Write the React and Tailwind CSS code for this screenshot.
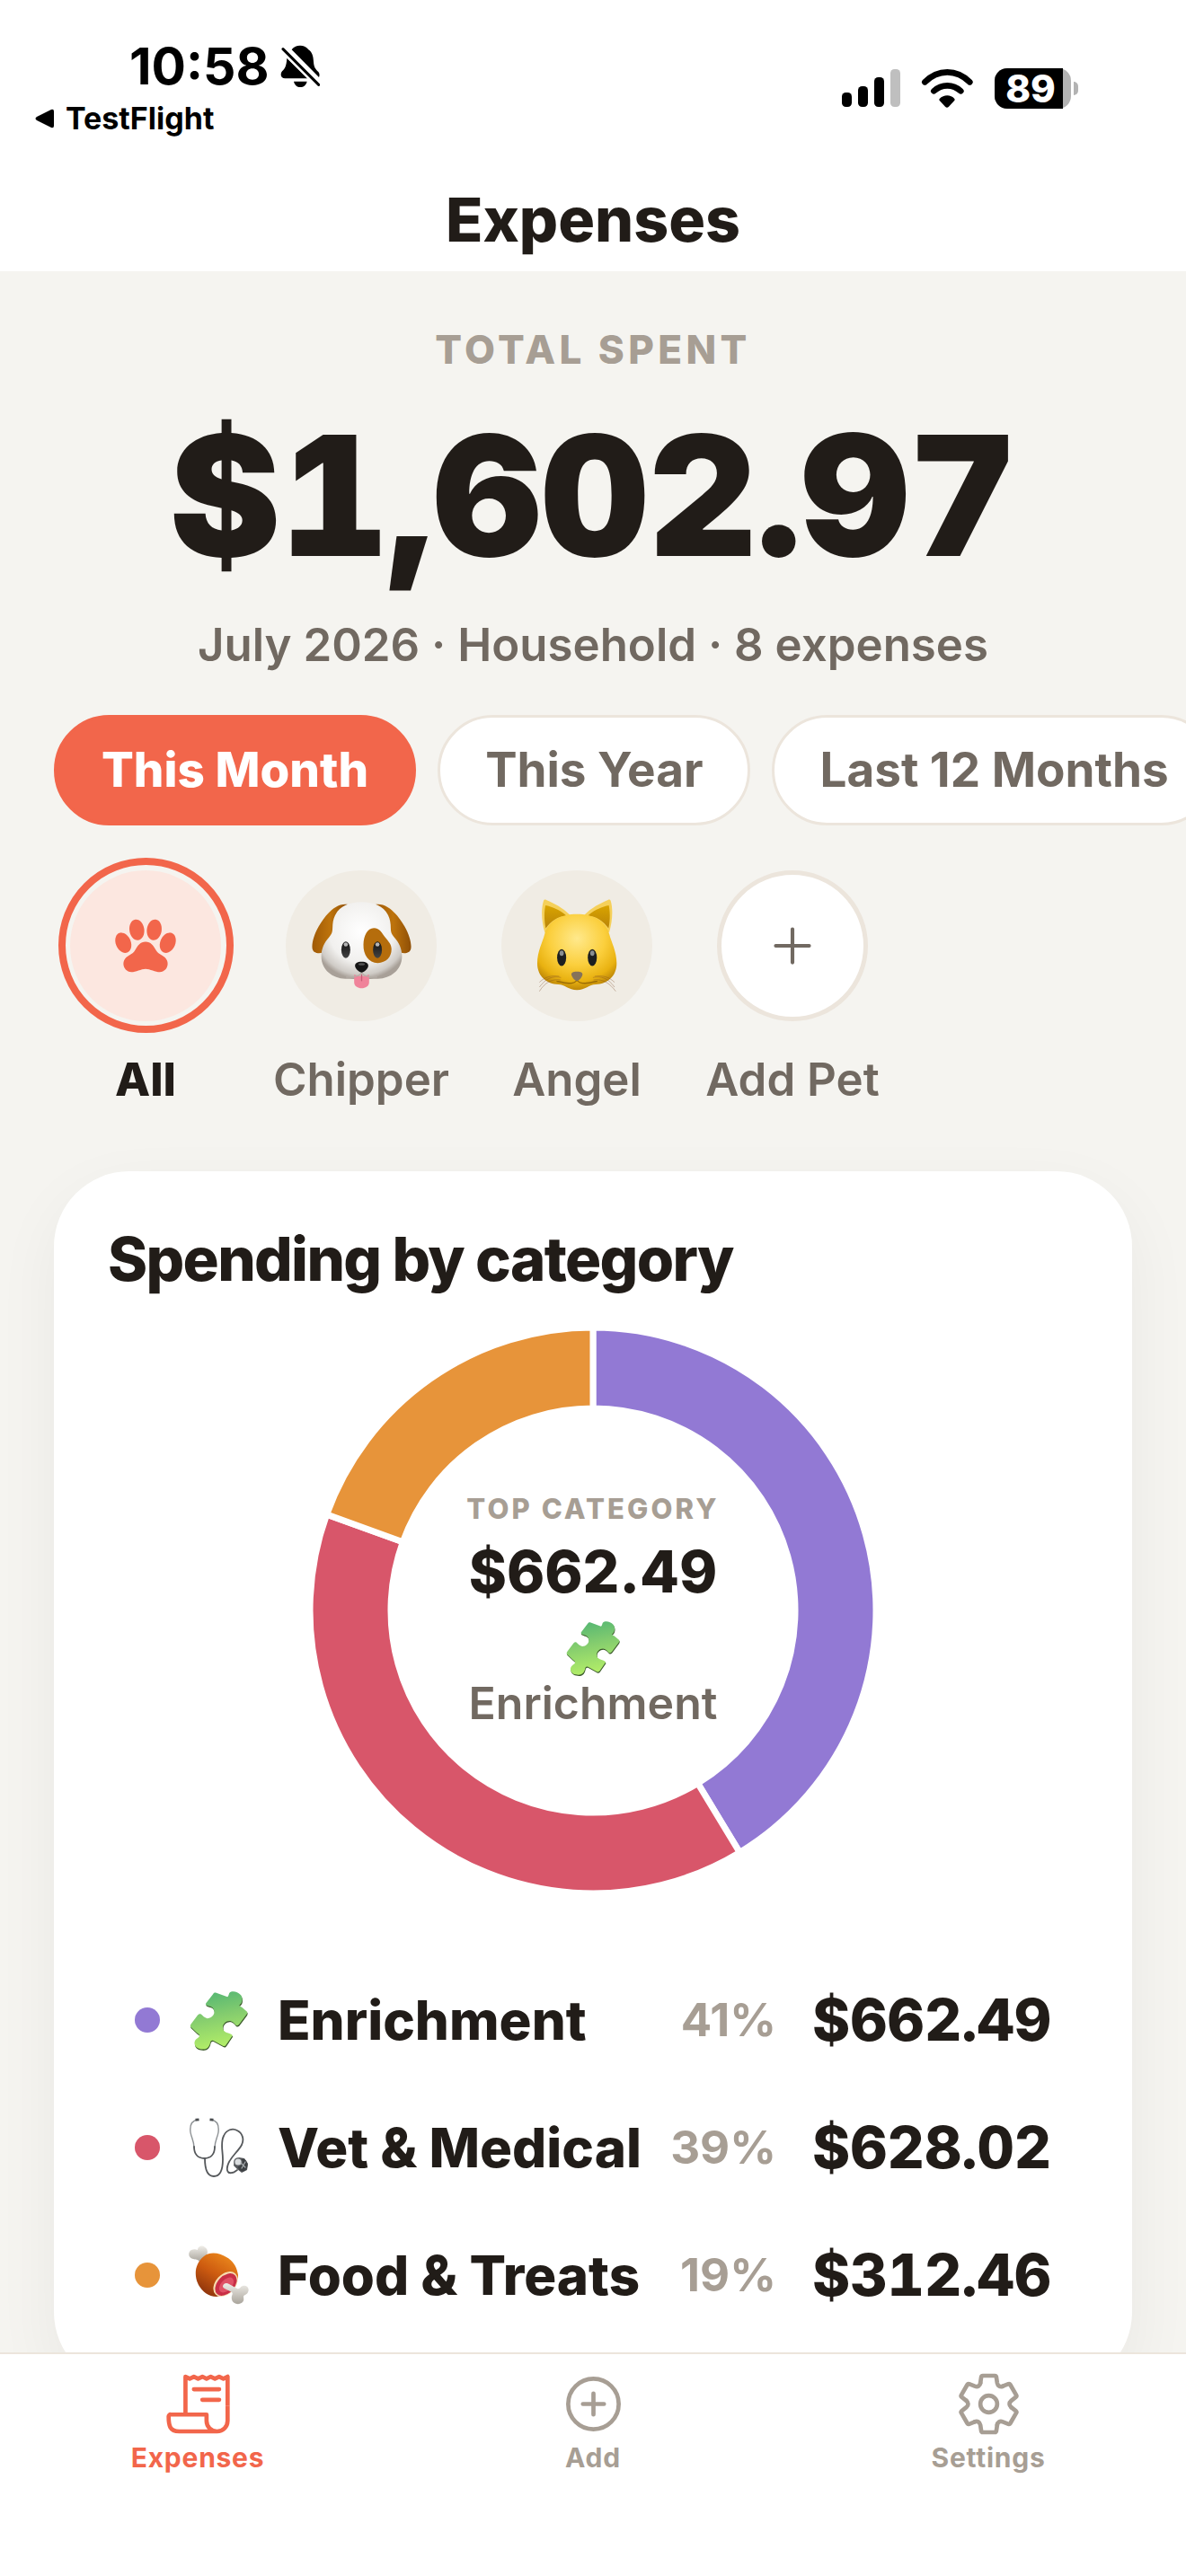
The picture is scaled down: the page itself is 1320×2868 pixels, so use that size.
import React, { useState } from 'react';
import { IoAddCircleOutline, IoPaw, IoReceiptOutline, IoAdd } from 'react-icons/io5';

const CATEGORIES = [
  { id: 'enrichment', name: 'Enrichment', amount: 662.49, percent: 41, color: '#9279d4', icon: PuzzleIcon },
  { id: 'vet', name: 'Vet & Medical', amount: 628.02, percent: 39, color: '#d8566a', icon: StethoscopeIcon },
  { id: 'food', name: 'Food & Treats', amount: 312.46, percent: 19, color: '#e7943a', icon: MeatIcon },
];

const PERIODS = ['This Month', 'This Year', 'Last 12 Months'];

const TABS = [
  { id: 'expenses', label: 'Expenses', icon: IoReceiptOutline },
  { id: 'add', label: 'Add', icon: IoAddCircleOutline },
  { id: 'settings', label: 'Settings', icon: GearIcon },
];

const money = (value) => value.toLocaleString('en-US', { style: 'currency', currency: 'USD' });

function DogIcon() {
  return (
    <svg viewBox="912 215 340 296" className="w-[113px]" aria-hidden="true">
      <defs>
        <radialGradient id="dogHead" cx="0.5" cy="0.38" r="0.62">
          <stop offset="0" stopColor="#ffffff" />
          <stop offset="0.65" stopColor="#f1f0ee" />
          <stop offset="0.9" stopColor="#cfcbc6" />
          <stop offset="1" stopColor="#a8a098" />
        </radialGradient>
        <linearGradient id="dogEar" x1="0" y1="0" x2="1" y2="0">
          <stop offset="0" stopColor="#a05a06" />
          <stop offset="0.5" stopColor="#bd730c" />
          <stop offset="1" stopColor="#8f4f06" />
        </linearGradient>
        <linearGradient id="dogEye" x1="0" y1="0" x2="0" y2="1">
          <stop offset="0" stopColor="#111" />
          <stop offset="1" stopColor="#444" />
        </linearGradient>
      </defs>
      <path d="M1036 227c-42-6-76 36-98 74-16 28-24 58-21 74 3 14 17 17 33 14 24-16 44-60 50-100z" fill="url(#dogEar)" />
      <path d="M1128 227c42-6 76 36 98 74 16 28 24 58 21 74-3 14-17 17-33 14-24-16-44-60-50-100z" fill="url(#dogEar)" />
      <path d="M1082 219c-58 0-94 28-97 76-1 22 0 28-12 42-16 17-26 38-26 64 0 46 38 74 80 75 20 0 34 2 55 2s35-2 55-2c42-1 80-29 80-75 0-26-10-47-26-64-12-14-11-20-12-42-3-48-39-76-97-76z" fill="url(#dogHead)" />
      <path d="M1123 306c-22 0-34 26-35 55-1 34 17 62 48 62 28 0 46-20 46-46 0-18-12-28-22-41-11-14-17-30-37-30z" fill="#b56d0c" />
      <ellipse cx="1029" cy="379" rx="15" ry="28" fill="url(#dogEye)" />
      <ellipse cx="1135" cy="379" rx="15" ry="28" fill="url(#dogEye)" />
      <ellipse cx="1029" cy="361" rx="7" ry="7" fill="#b5b5b5" />
      <ellipse cx="1135" cy="361" rx="7" ry="7" fill="#b5b5b5" />
      <path d="M1057 462c16 7 34 7 50 0v26c0 26-50 26-50 0z" fill="#f0839a" />
      <path d="M1082 462v20" stroke="#c65c74" strokeWidth="4" strokeLinecap="round" />
      <path d="M1030 470c22 2 42-2 52-14 10 12 30 16 52 14" fill="none" stroke="#b5aea7" strokeWidth="4" />
      <path d="M1082 419c15 0 23 5 22 15-1 9-14 21-22 21s-21-12-22-21c-1-10 7-15 22-15z" fill="#151515" />
      <ellipse cx="1082" cy="427" rx="11" ry="4" fill="#555" />
    </svg>
  );
}

function CatIcon() {
  return (
    <svg viewBox="168 186 272 314" className="w-[91px]" aria-hidden="true">
      <defs>
        <radialGradient id="catHead" cx="0.5" cy="0.32" r="0.7">
          <stop offset="0" stopColor="#ffe98c" />
          <stop offset="0.5" stopColor="#fbcf3d" />
          <stop offset="0.8" stopColor="#e9b211" />
          <stop offset="1" stopColor="#b67f05" />
        </radialGradient>
        <linearGradient id="catEar" x1="0" y1="0" x2="0" y2="1">
          <stop offset="0" stopColor="#d9a400" />
          <stop offset="1" stopColor="#b98408" />
        </linearGradient>
      </defs>
      <path d="M196 300c-12-38-12-82-4-106 2-4 5-4 9-2 28 12 58 28 78 50zM410 300c12-38 13-82 5-106-2-4-5-4-9-2-28 12-58 28-78 50z" fill="#f5d05a" />
      <path d="M199 286c-6-28-5-56-1-76 24 4 52 18 70 34-28 2-52 18-69 42zM408 286c6-28 5-56 1-76-24 4-52 18-70 34 28 2 52 18 69 42z" fill="url(#catEar)" />
      <path d="M303 239c-54 0-96 24-108 68-6 24-24 56-24 96 0 44 32 69 70 70 22 0 34 19 62 19s40-19 62-19c38-1 70-26 70-70 0-40-18-72-24-96-12-44-54-68-108-68z" fill="url(#catHead)" />
      <path d="M235 462c26 6 54 14 68-3 14 17 42 9 68 3" fill="none" stroke="#9b6c05" strokeWidth="4" />
      <path d="M250 450c-28-6-50 2-72 32M248 458c-28-4-52 8-70 38M244 446c-26-4-48 2-66 20M356 450c28-6 50 2 72 32M358 458c28-4 52 8 74 38M362 446c26-4 48 2 66 20" fill="none" stroke="#7b4a2a" strokeOpacity="0.55" strokeWidth="2" />
      <ellipse cx="252" cy="384" rx="15" ry="28" fill="#1d1f20" />
      <ellipse cx="354" cy="384" rx="15" ry="28" fill="#1d1f20" />
      <ellipse cx="252" cy="369" rx="7" ry="9" fill="#8a8f92" />
      <ellipse cx="354" cy="369" rx="7" ry="9" fill="#8a8f92" />
      <path d="M303 430c14 0 20 4 18 12-2 8-12 19-18 19s-16-11-18-19c-2-8 4-12 18-12z" fill="#85735a" />
    </svg>
  );
}

function PuzzleIcon({ className }) {
  const piece =
    'M777 820l27 10c3-2 3-7 5-10 6-6 20-3 27 5 6 7 4 19-1 23-4 3-1 4 4 7l12 10c2 2 1 5-1 8l-18 24c-3 3-5 3-8 1-4-4-8-10-15-10-9 0-17 8-16 17 0 7 5 10 11 12 8 3 12 4 12 7l-15 22c-3 4-5 4-9 2l-22-12c-5-2-7 1-8 6-3 13-12 17-24 14-12-2-17-13-12-21 4-6 9-6 10-10 1-3-2-5-6-8l-15-14c-2-2-1-5 1-8l16-21c3-3 5-4 8-2 4 3 8 9 15 10 9 0 18-8 17-17-1-9-7-12-13-13-6-2-9-3-7-7l17-22c3-4 5-4 8-3z';
  return (
    <svg viewBox="710 814 146 146" className={className} aria-hidden="true">
      <defs>
        <linearGradient id="puzzle" x1="0" y1="0" x2="0.2" y2="1">
          <stop offset="0" stopColor="#4db374" />
          <stop offset="0.5" stopColor="#85cd6e" />
          <stop offset="1" stopColor="#b0ec68" />
        </linearGradient>
      </defs>
      <path d={piece} fill="#3c5a2c" transform="translate(1 3)" />
      <path d={piece} fill="url(#puzzle)" />
    </svg>
  );
}

function StethoscopeIcon({ className }) {
  return (
    <svg viewBox="0 0 67 67" className={className} fill="none" strokeLinecap="round" aria-hidden="true">
      <path d="M10 2C3 3 1 8 2 16c1 6 4 10 4 17M25 2c7 1 9 6 8 14-1 6-4 10-4 17" stroke="#8d9194" strokeWidth="1.4" />
      <path d="M6 32c0 8 4 13 11.500 13S29 40 29 32" stroke="#55585b" strokeWidth="1.8" />
      <path d="M18 45c0 12 3 20 10 20 8 0 10-8 10-19 0-10-3-18 1-26 3-7 10-9 15-6 6 3 8 10 5 16-4 8-15 15-16 25-1 5 2 7 5 6 3 0 4-2 6-3" stroke="#55585b" strokeWidth="1.8" />
      <path d="M7.500 2.200l4-.4M23.500 1.800l4 .4" stroke="#4a4d50" strokeWidth="2.8" strokeLinecap="butt" />
      <path d="M51 47l5-3 6 1 4 6-1 7-6 3-5-4-4-4z" fill="#55585b" />
      <ellipse cx="60" cy="52.5" rx="5.5" ry="7" fill="#3d4043" />
      <circle cx="55" cy="49" r="4.2" fill="#d9dcde" stroke="#5b5e61" strokeWidth="1.2" />
      <path d="M58 50l5 5M63 49l-4 7" stroke="#a7abae" strokeWidth="1.2" />
    </svg>
  );
}

function MeatIcon({ className }) {
  return (
    <svg viewBox="0 0 67 67" className={className} aria-hidden="true">
      <defs>
        <linearGradient id="meat" x1="0.8" y1="0" x2="0.2" y2="1">
          <stop offset="0" stopColor="#ee8c1d" />
          <stop offset="0.5" stopColor="#cd5b10" />
          <stop offset="1" stopColor="#87300c" />
        </linearGradient>
        <linearGradient id="bone" x1="0" y1="0" x2="0" y2="1">
          <stop offset="0" stopColor="#efede8" />
          <stop offset="1" stopColor="#aaa59c" />
        </linearGradient>
      </defs>
      <path d="M10 5c0-4 5-6 8-3 4 2 3 7 2 9l-8 7c-2-3-4-2-7-3-6-1-6-8-2-10 2-1 5-1 7 0z" fill="url(#bone)" />
      <path d="M17 12C25 6 35 9 42 13c8 4 12 12 13 20 0 10-12 22-24 24-9 0-16-6-20-13C6 34 6 21 17 12z" fill="url(#meat)" />
      <ellipse cx="41" cy="43" rx="11" ry="16" fill="#f7dcae" transform="rotate(43 41 43)" />
      <ellipse cx="41.5" cy="43.5" rx="9.5" ry="14.5" fill="#c92f47" transform="rotate(43 41.500 43.500)" />
      <ellipse cx="42" cy="44" rx="6" ry="10" fill="#df5266" transform="rotate(43 42 44)" />
      <path d="M38 45c1-3 4-4 7-2l9 5c3 1 3-2 6-3 5-1 8 3 6 7-1 3-5 3-5 5s1 4-1 6c-4 4-11 2-12-3-1-4 2-6 0-8l-8-4c-2-1-2-2-2-3z" fill="url(#bone)" />
    </svg>
  );
}

// One tooth plus the valley after it, repeated six times around the centre
function GearIcon({ className }) {
  const steps = [0, 60, 120, 180, 240, 300];
  return (
    <svg viewBox="-112 -112 224 224" className={className} aria-hidden="true">
      <g fill="none" stroke="currentColor" strokeWidth="14" strokeLinecap="round" strokeLinejoin="round">
        {steps.map((deg) => (
          <path
            key={deg}
            d="M-28-70L-25-90Q-24-94-20-94L20-94Q24-94 25-90L28-70C30-59 38-56 47-59"
            transform={`rotate(${deg})`}
          />
        ))}
        <circle r="28" />
      </g>
    </svg>
  );
}

function BellOffIcon() {
  return (
    <svg viewBox="843 44 134 144" className="h-12" aria-hidden="true">
      <path d="M881 60C886 52 897 46 909 46s23 6 28 14c12 8 16 20 17 40 1 18 6 24 16 34 4 4 5 12 2 18z" />
      <path d="M865 88l70 68h-76c-14 0-18-14-10-24 10-10 14-16 16-44zM888 166h44c-3 12-11 19-22 19s-19-7-22-19z" />
      <path d="M852 58L971 177" stroke="#fff" strokeWidth="24" />
      <path d="M852 58L971 177" stroke="#000" strokeWidth="9" strokeLinecap="round" />
    </svg>
  );
}

function WifiIcon() {
  return (
    <svg viewBox="312 54 176 132" className="h-11" aria-hidden="true">
      <g fill="none" stroke="#000" strokeWidth="20" strokeLinecap="round">
        <path d="M325 100c44-44 106-44 150 0" />
        <path d="M355 130c26-24 64-24 90 0" />
      </g>
      <path d="M374 156c14-15 38-15 50 0 2 3 1 5-1 7l-18 19c-4 4-8 4-12 0l-18-19c-2-2-3-4-1-7z" />
    </svg>
  );
}

function StatusBar() {
  return (
    <div className="flex items-center justify-between pt-11 pr-[120px] pl-[39px] text-black">
      <div>
        <div className="flex items-center gap-3 pl-[105px]">
          <span className="text-[57px] leading-[60px] font-bold">10:58</span>
          <BellOffIcon />
        </div>
        <a href="#testflight" className="mt-2 flex items-center gap-3 text-[34px] leading-[40px] font-bold">
          <svg viewBox="0 0 22 22" className="w-[22px]" aria-hidden="true">
            <path d="M2 9L18 1q3-1 3 2v16q0 3-3 2L2 13q-3-2 0-4z" />
          </svg>
          TestFlight
        </a>
      </div>
      <div className="flex items-center gap-[23px]">
        <svg viewBox="0 0 65 42" className="w-[65px]" aria-hidden="true">
          <rect x="0" y="26" width="11" height="16" rx="4.5" />
          <rect x="18" y="19" width="11" height="23" rx="4.5" />
          <rect x="36" y="9" width="11" height="33" rx="4.5" />
          <rect x="54" y="0" width="11" height="42" rx="4.5" fill="#bfbfbf" />
        </svg>
        <WifiIcon />
        <div className="flex items-center gap-[3px]">
          <div className="w-[85px] rounded-[14px] bg-[#b3b3b3] pr-[9px]">
            <div className="rounded-l-[14px] bg-black pl-1 text-center text-[42px] leading-[45px] font-extrabold text-white">
              89
            </div>
          </div>
          <div className="h-[15px] w-[5px] rounded-r-full bg-[#b3b3b3]" />
        </div>
      </div>
    </div>
  );
}

function slicePath(start, end, outer, inner) {
  const point = (share, r) => {
    const angle = share * 2 * Math.PI - Math.PI / 2;
    return `${r * Math.cos(angle)} ${r * Math.sin(angle)}`;
  };
  const large = end - start > 0.5 ? 1 : 0;
  return `M${point(start, outer)}A${outer} ${outer} 0 ${large} 1 ${point(end, outer)}L${point(end, inner)}A${inner} ${inner} 0 ${large} 0 ${point(start, inner)}Z`;
}

function DonutChart({ categories }) {
  const total = categories.reduce((sum, c) => sum + c.amount, 0);
  const top = categories[0];
  let position = 0;

  return (
    <div className="relative mx-auto mt-[38px] w-[630px]">
      <svg viewBox="-315 -315 630 630" className="w-full" role="img" aria-label="Spending by category">
        {categories.map((c) => {
          const start = position;
          position += c.amount / total;
          return (
            <path key={c.id} d={slicePath(start, position, 315, 225)} fill={c.color} stroke="#fff" strokeWidth="7" />
          );
        })}
      </svg>
      <div className="absolute inset-0 flex flex-col items-center justify-center">
        <span className="text-[31px] leading-[40px] font-extrabold tracking-widest text-[#a79e94]">TOP CATEGORY</span>
        <span className="mt-3 text-[64px] leading-[76px] font-extrabold">{money(top.amount)}</span>
        <top.icon className="mt-4 w-[62px]" />
        <span className="text-[50px] leading-[60px] font-semibold text-[#716961]">{top.name}</span>
      </div>
    </div>
  );
}

function PetButton({ label, active, onClick, className, children }) {
  return (
    <button onClick={onClick} aria-pressed={active} className="flex w-[204px] flex-col items-center gap-[22px]">
      <span
        className={`flex size-[195px] items-center justify-center rounded-full border-8 ${
          active ? 'border-[#f2664b]' : 'border-transparent'
        }`}
      >
        <span className={`flex size-[168px] items-center justify-center rounded-full ${className}`}>{children}</span>
      </span>
      <span
        className={`text-[51px] leading-[60px] whitespace-nowrap ${
          active ? 'font-extrabold text-[#211c18]' : 'font-semibold text-[#716961]'
        }`}
      >
        {label}
      </span>
    </button>
  );
}

export default function App() {
  const [period, setPeriod] = useState('This Month');
  const [pet, setPet] = useState('All');
  const [tab, setTab] = useState('expenses');
  const total = CATEGORIES.reduce((sum, c) => sum + c.amount, 0);

  return (
    <div className="flex h-screen flex-col bg-[#f5f4f0] font-['Inter',sans-serif] text-[#211c18]">
      <header className="bg-white pb-[22px]">
        <StatusBar />
        <h1 className="mt-14 text-center text-[68px] leading-[72px] font-extrabold">Expenses</h1>
      </header>

      <main className="min-h-0 flex-1 overflow-y-auto [scrollbar-width:none]">
        <section className="pt-[60px] text-center">
          <p className="text-[44px] leading-[54px] font-extrabold tracking-widest text-[#a79e94]">TOTAL SPENT</p>
          <p className="mt-9 text-[186px] leading-[200px] font-black tabular-nums">{money(total)}</p>
          <p className="mt-9 text-[51px] leading-[60px] font-semibold text-[#716961]">
            July 2026 · Household · 8 expenses
          </p>
        </section>

        <div className="mt-12 flex gap-6 overflow-x-auto px-[60px] [scrollbar-width:none]">
          {PERIODS.map((p) => (
            <button
              key={p}
              onClick={() => setPeriod(p)}
              aria-pressed={p === period}
              className={`shrink-0 rounded-full border-3 px-[50px] py-[28px] text-[53px] leading-[61px] ${
                p === period
                  ? 'border-[#f2664b] bg-[#f2664b] font-extrabold text-white'
                  : 'border-[#ece5dc] bg-white font-bold text-[#716961]'
              }`}
            >
              {p}
            </button>
          ))}
        </div>

        <div className="mt-9 flex gap-9 px-[60px]">
          <PetButton label="All" active={pet === 'All'} onClick={() => setPet('All')} className="bg-[#fce7e0]">
            <IoPaw className="size-[72px] text-[#f2664b]" />
          </PetButton>
          <PetButton label="Chipper" active={pet === 'Chipper'} onClick={() => setPet('Chipper')} className="bg-[#f0ece4]">
            <DogIcon />
          </PetButton>
          <PetButton label="Angel" active={pet === 'Angel'} onClick={() => setPet('Angel')} className="bg-[#f0ece4]">
            <CatIcon />
          </PetButton>
          <PetButton label="Add Pet" className="border-5 border-[#ece5dc] bg-white">
            <IoAdd className="size-[66px] text-[#716961]" />
          </PetButton>
        </div>

        <section className="mx-[60px] mt-[72px] mb-[60px] rounded-[84px] bg-white px-[60px] pt-[60px] pb-[54px] shadow-[0_24px_72px_rgba(33,28,24,0.05)]">
          <h2 className="text-[67px] leading-[76px] font-extrabold tracking-tight">Spending by category</h2>
          <DonutChart categories={CATEGORIES} />
          <ul className="mt-[70px] px-[30px]">
            {CATEGORIES.map((c) => (
              <li key={c.id} className="flex h-[142px] items-center">
                <span className="size-7 shrink-0 rounded-full" style={{ backgroundColor: c.color }} />
                <c.icon className="ml-8 w-[67px] shrink-0" />
                <span className="ml-8 text-[60px] leading-[72px] font-extrabold whitespace-nowrap">{c.name}</span>
                <span className="ml-auto text-[51px] leading-[72px] font-bold text-[#a79e94]">{c.percent}%</span>
                <span className="ml-10 text-[64px] leading-[72px] font-extrabold tabular-nums">{money(c.amount)}</span>
              </li>
            ))}
          </ul>
        </section>
      </main>

      <nav className="flex border-t-2 border-[#ece5dc] bg-white pt-[18px] pb-[112px]">
        {TABS.map((t) => (
          <button
            key={t.id}
            onClick={() => setTab(t.id)}
            className={`flex flex-1 flex-col items-center gap-[2px] ${t.id === tab ? 'text-[#f2664b]' : 'text-[#a79e94]'}`}
          >
            <t.icon className="size-[75px]" />
            <span className="text-[30px] leading-[40px] font-bold tracking-wide">{t.label}</span>
          </button>
        ))}
      </nav>
    </div>
  );
}
